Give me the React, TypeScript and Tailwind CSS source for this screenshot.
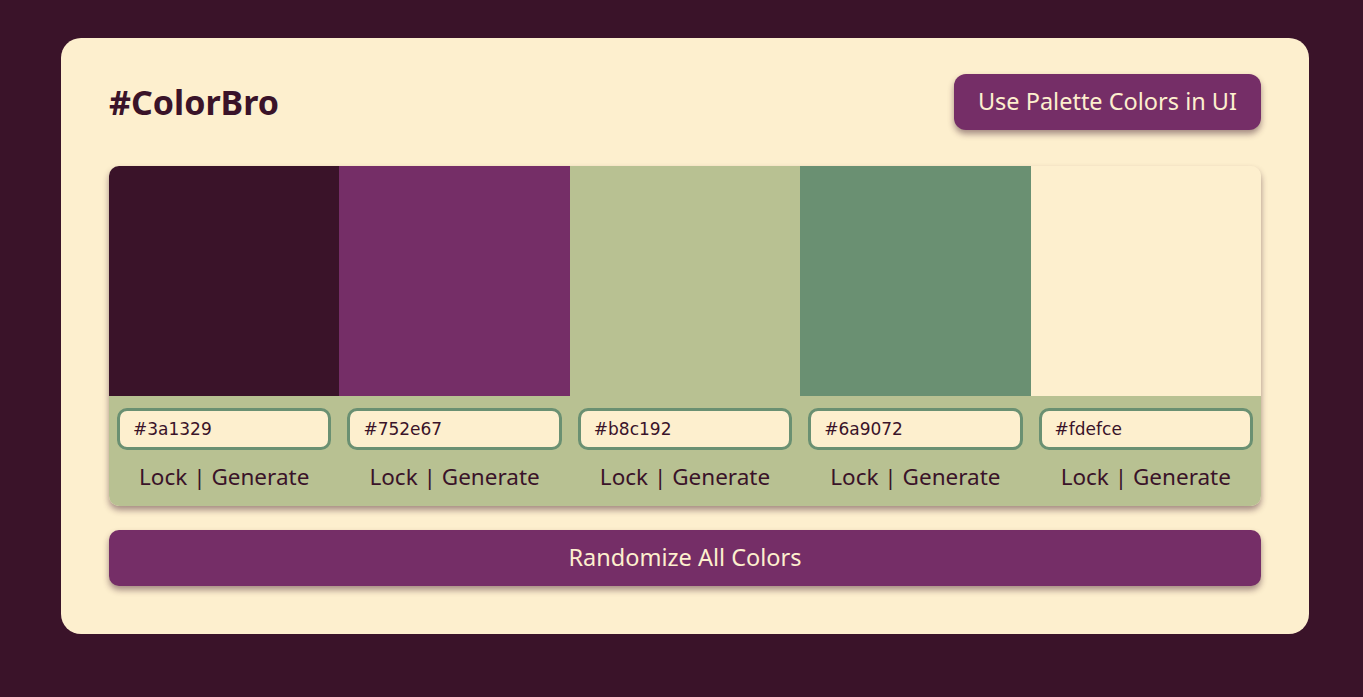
const colors = ["#3a1329", "#752e67", "#b8c192", "#6a9072", "#fdefce"]

export default function App() {
  return (
    <div className="min-h-[697px] bg-[#3a1329] pt-[38px] pl-[61px] pr-[54px] pb-[63px] font-['Noto_Sans',sans-serif]">
      <div className="rounded-[20px] bg-[#fdefce] px-12 pt-9 pb-12">
        <header className="flex h-14 items-center justify-between">
          <h1 className="text-[34px] font-bold text-[#3a1329]">#ColorBro</h1>
          <button className="h-14 rounded-xl bg-[#752e67] px-6 text-[23.5px] text-[#fdefce] shadow-[0_4px_6px_rgba(58,19,41,0.45)]">
            Use Palette Colors in UI
          </button>
        </header>

        <div className="mt-9 overflow-hidden rounded-[10px] shadow-[0_4px_6px_rgba(58,19,41,0.45)]">
          <div className="grid h-[230px] grid-cols-5">
            {colors.map((c) => (
              <div key={c} style={{ backgroundColor: c }} />
            ))}
          </div>
          <div className="grid h-[110px] grid-cols-5 bg-[#b8c192]">
            {colors.map((c) => (
              <div key={c} className="flex flex-col items-center px-2 pt-3">
                <input
                  readOnly
                  value={c}
                  className="h-[42px] w-full rounded-[10px] border-[3px] border-[#6a9072] bg-[#fdefce] px-[13px] font-['DejaVu_Sans',sans-serif] text-[17px] text-[#3a1329] outline-none"
                />
                <p className="mt-[16px] text-[22.5px] leading-none text-[#3a1329]">Lock | Generate</p>
              </div>
            ))}
          </div>
        </div>

        <button className="mt-6 h-14 w-full rounded-[10px] bg-[#752e67] text-[23.5px] text-[#fdefce] shadow-[0_4px_6px_rgba(58,19,41,0.45)]">
          Randomize All Colors
        </button>
      </div>
    </div>
  )
}
